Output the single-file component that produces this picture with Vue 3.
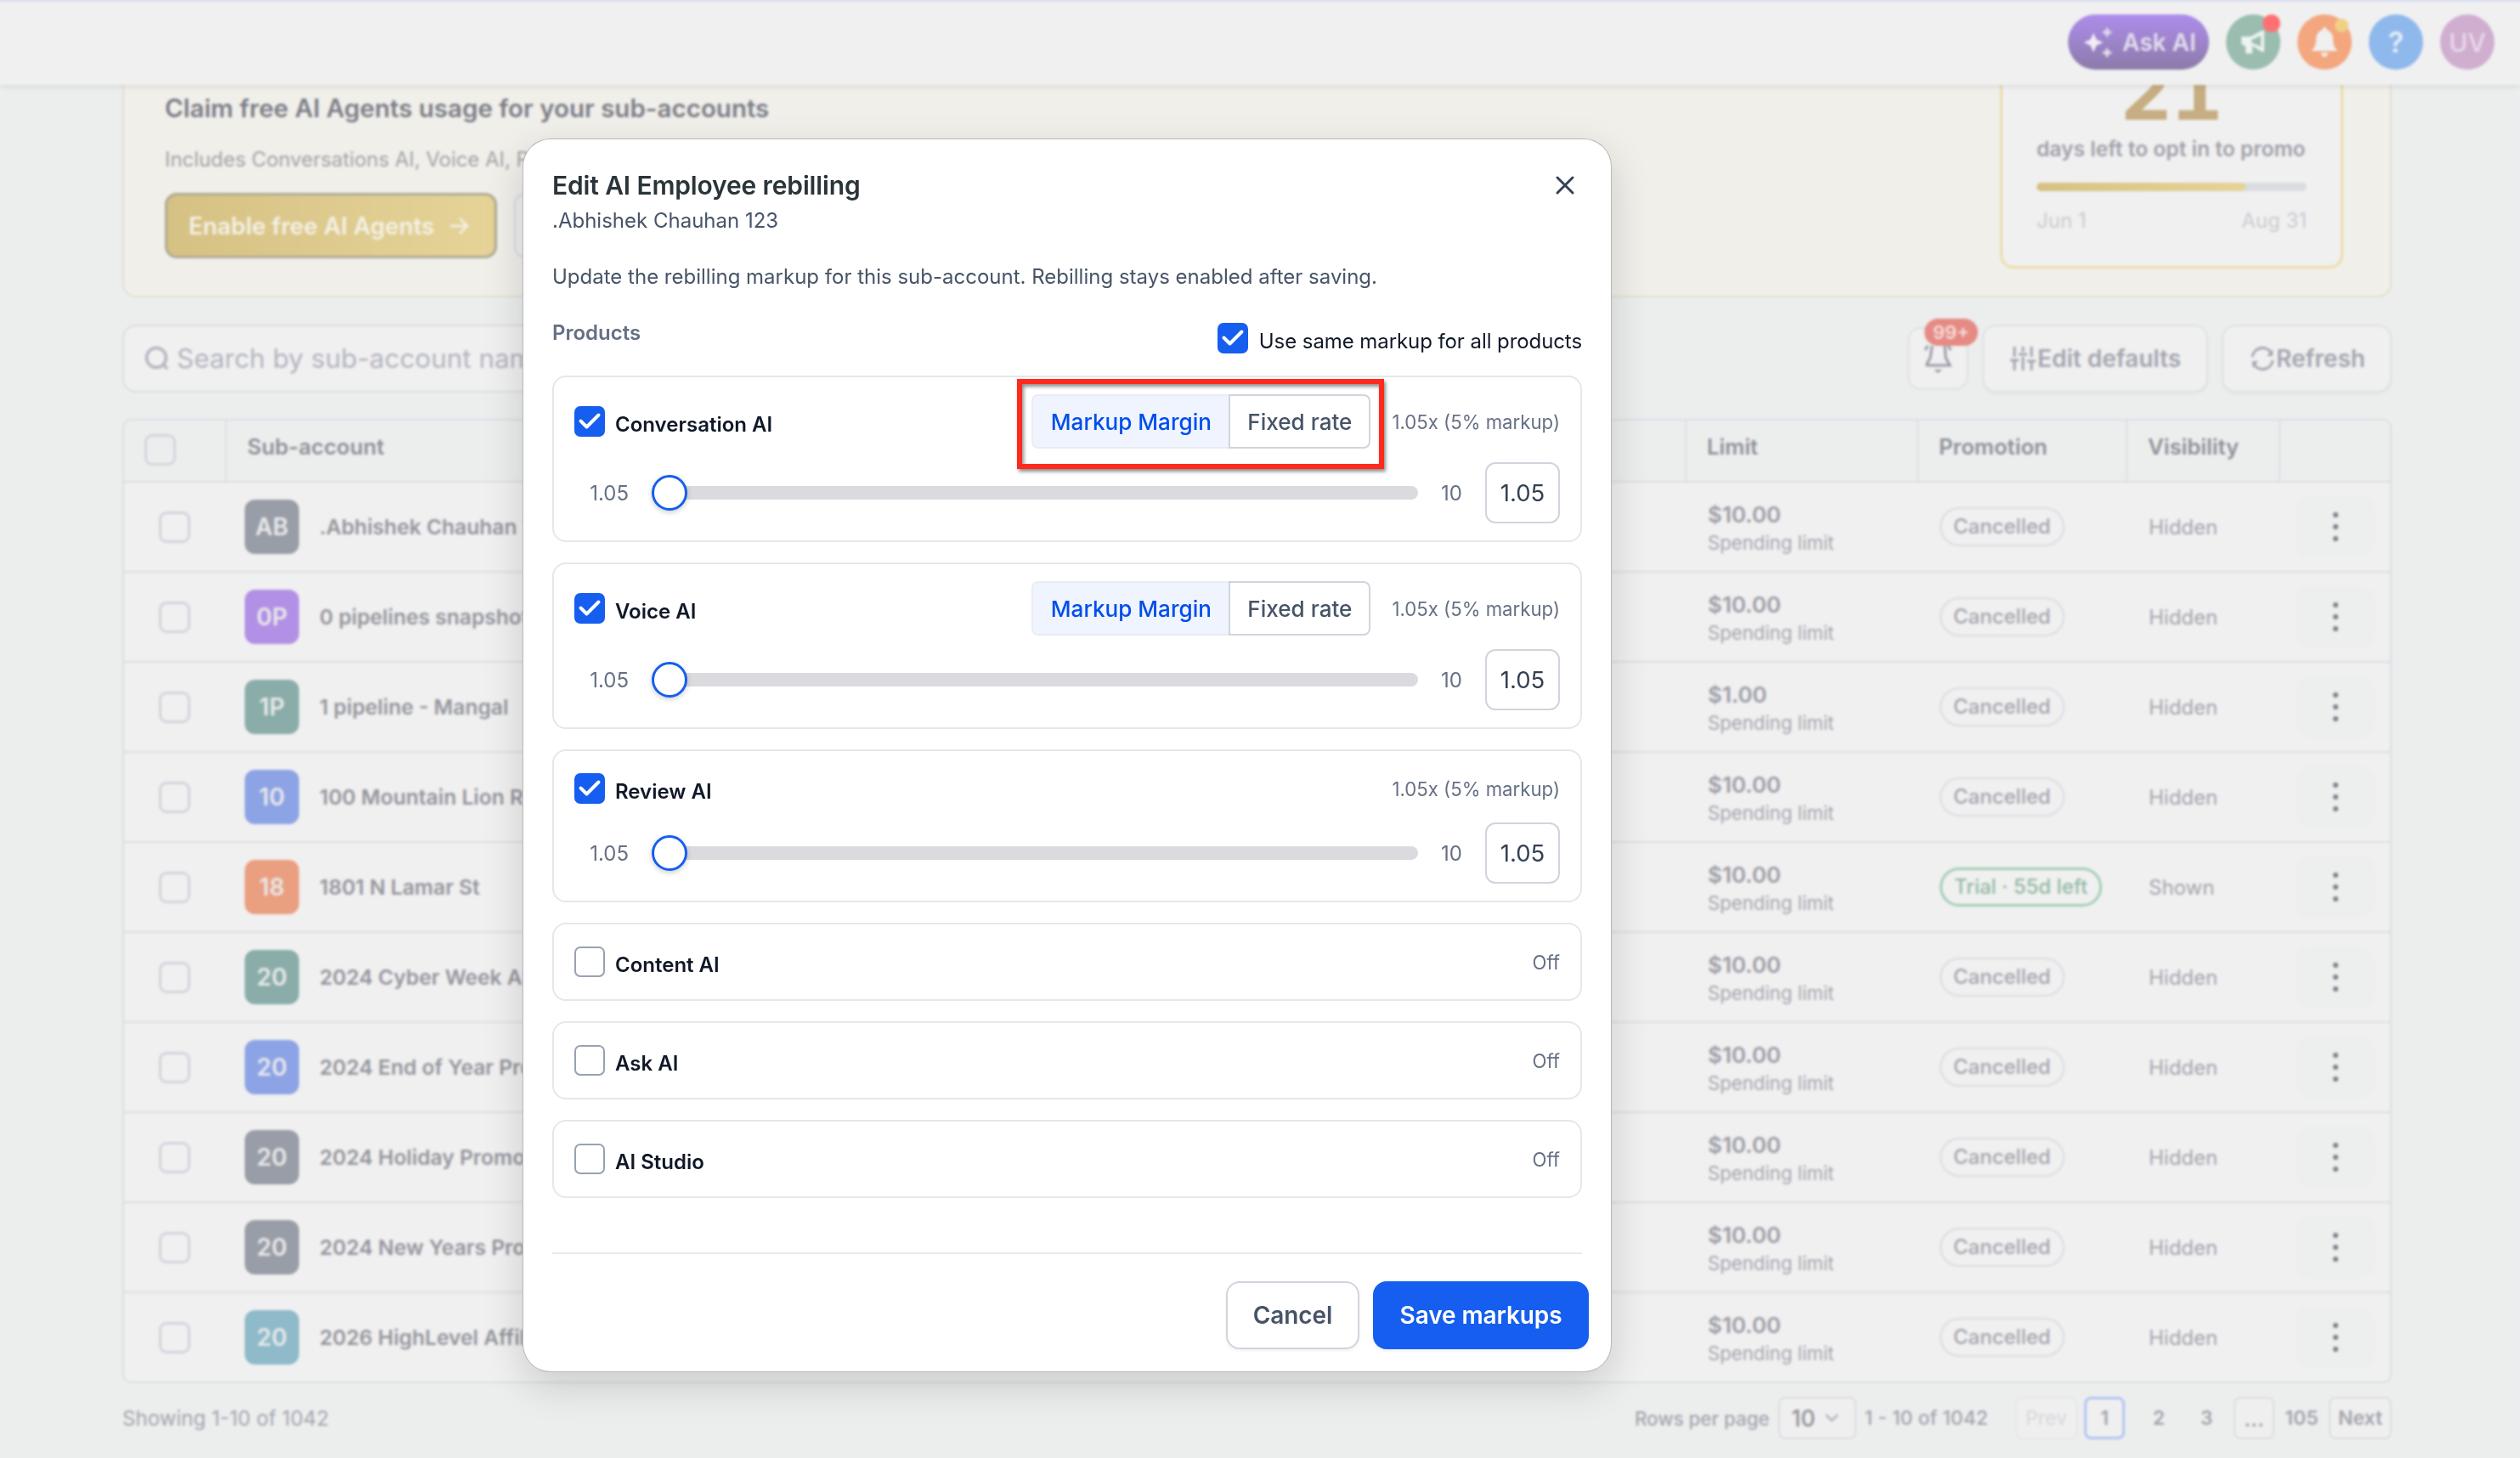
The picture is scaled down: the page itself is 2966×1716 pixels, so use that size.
<template>
  <div class="page">
    <!-- top bar -->
    <header class="topbar">
      <div class="ask">
        <svg width="32" height="36" viewBox="0 0 32 36">
          <path d="M11 6.500l3.500 8L22.500 18l-8 3.500L11 29.500l-3.500-8L-.5 18l8-3.500z" fill="#f1eef6" />
          <path d="M27 -.5l2.200 4.300L33.500 6l-4.300 2.200L27 12.500l-2.200-4.300L20.500 6l4.300-2.200z" fill="#ded6ec" />
          <path d="M27 23.500l2.200 4.300 4.300 2.200-4.300 2.200L27 36.500l-2.200-4.300-4.300-2.200 4.300-2.200z" fill="#dedae6" />
        </svg>
        <span>Ask AI</span>
      </div>
      <div class="circle green">
        <svg width="30" height="30" viewBox="0 0 30 30">
          <path d="M1 8h11l13-7h3v25h-3l-11-7v9H6v-9H4l-3-3z" fill="#eef2f0" />
          <path d="M13 12l11-5v13l-11-5z" fill="#9abdb0" />
        </svg>
        <i class="dot red"></i>
      </div>
      <div class="circle orange">
        <svg width="32" height="36" viewBox="0 0 32 36">
          <path d="M16 0c1.500 0 2.500 1.500 2.500 3.200C23.500 4.500 26 9 26 14.500c0 7 2 9 5 13.500H1c3-4.500 5-6.500 5-13.500C6 9 8.500 4.500 13.500 3.200 13.500 1.500 14.500 0 16 0zM12 30h8c0 3-2 5-4 5s-4-2-4-5z" fill="#f0f0f0" />
        </svg>
        <i class="dot yellow"></i>
      </div>
      <div class="circle blue">?</div>
      <div class="circle pink">UV</div>
    </header>

    <main class="main">
      <!-- promo banner -->
      <section class="banner">
        <div class="banner-left">
          <h2>Claim free AI Agents usage for your sub-accounts</h2>
          <p>Includes Conversations AI, Voice AI, R</p>
          <div class="banner-btns">
            <button class="gold">
              Enable free AI Agents
              <svg width="22" height="22" viewBox="0 0 22 22" fill="none" stroke="#f2eee0" stroke-width="3">
                <path d="M1 11h19M12 2l9 9-9 9" />
              </svg>
            </button>
            <button class="ghost"></button>
          </div>
        </div>
        <div class="promo">
          <div class="num">21</div>
          <div class="days">days left to opt in to promo</div>
          <div class="bar"><div class="fill" :style="{ width: promo + '%' }"></div></div>
          <div class="dates"><span>Jun 1</span><span>Aug 31</span></div>
        </div>
      </section>

      <!-- search and actions -->
      <section class="toolbar">
        <div class="search">
          <svg width="30" height="30" viewBox="0 0 30 30" fill="none" stroke="#b3b4c0" stroke-width="3.500">
            <circle cx="14" cy="14" r="11.500" />
            <path d="M22 22l5 5" />
          </svg>
          <span>Search by sub-account nam</span>
        </div>
        <div class="actions">
          <div class="bell">
            <svg width="34" height="36" viewBox="0 0 34 36" fill="none" stroke="#999ba7" stroke-width="3">
              <path d="M3 26h28l-5-9-1-14M3 26l5-9 2-14" />
              <path d="M2 8l3-5M32 8l-3-5" />
              <path d="M12 31h10l-5 4z" fill="#999ba7" stroke="none" />
            </svg>
            <span class="badge">99+</span>
          </div>
          <button class="action edit">
            <svg width="30" height="28" viewBox="0 0 30 28" fill="none" stroke="#a3a5b0" stroke-width="3">
              <path d="M5 0v12M5 16v12M0 16h10M15 0v6M15 12v16M10 9h10M25 0v12M25 18v10M20 17h10" />
            </svg>
            Edit defaults
          </button>
          <button class="action refresh">
            <svg width="28" height="28" viewBox="0 0 28 28" fill="none" stroke="#a3a5b0" stroke-width="3">
              <path d="M2 12A12 12 0 0 1 24 7M26 16A12 12 0 0 1 4 21" />
              <path d="M26 3v8h-7zM2 25v-8h7z" fill="#a3a5b0" stroke="none" />
            </svg>
            Refresh
          </button>
        </div>
      </section>

      <!-- sub-account table -->
      <section class="table">
        <div class="tr head">
          <div class="c-check"><i class="box"></i></div>
          <div class="th">Sub-account</div>
          <div class="th">Limit</div>
          <div class="th">Promotion</div>
          <div class="th">Visibility</div>
          <div class="th"></div>
        </div>
        <div v-for="(row, i) in rows" :key="i" class="tr">
          <div class="c-check"><i class="box"></i></div>
          <div class="c-name">
            <span class="avatar" :class="row.color">{{ row.initials }}</span>
            <span>{{ row.name }}</span>
          </div>
          <div class="c-limit">
            <b>{{ row.limit }}</b>
            <small>Spending limit</small>
          </div>
          <div class="c-promo">
            <span class="pill" :class="{ trial: row.trial }">{{ row.trial || "Cancelled" }}</span>
          </div>
          <div class="c-vis">{{ row.trial ? "Shown" : "Hidden" }}</div>
          <div class="c-more">
            <span class="more"><i></i><i></i><i></i></span>
          </div>
        </div>
      </section>

      <!-- pagination -->
      <section class="pager">
        <span class="showing">Showing 1-10 of 1042</span>
        <div class="pages">
          <span class="rpp">Rows per page</span>
          <span class="select">
            10
            <svg width="16" height="10" viewBox="0 0 16 10" fill="none" stroke="#b4b5be" stroke-width="2.500">
              <path d="M1 1l7 7 7-7" />
            </svg>
          </span>
          <span class="range">1 - 10 of 1042</span>
          <span class="pg bordered prev">Prev</span>
          <span class="pg bordered current">1</span>
          <span class="pg two">2</span>
          <span class="pg">3</span>
          <span class="pg bordered dots">...</span>
          <span class="pg">105</span>
          <span class="pg bordered next">Next</span>
        </div>
      </section>
    </main>

    <div class="mask"></div>

    <!-- modal -->
    <div class="modal">
      <div class="modal-head">
        <div>
          <h1>Edit AI Employee rebilling</h1>
          <p class="sub">.Abhishek Chauhan 123</p>
        </div>
        <svg class="close" width="24" height="24" viewBox="0 0 24 24" fill="none" stroke="#344054" stroke-width="3" stroke-linecap="round">
          <path d="M3 3l18 18M21 3L3 21" />
        </svg>
      </div>
      <p class="desc">Update the rebilling markup for this sub-account. Rebilling stays enabled after saving.</p>

      <div class="products">
        <span class="label">Products</span>
        <label class="same">
          <span class="check on">
            <svg width="26" height="20" viewBox="0 0 26 20"><path d="M2.500 9.500l7 7L23.500 2.500" /></svg>
          </span>
          <span class="same-text">Use same markup for all products</span>
        </label>
      </div>

      <div class="cards">
        <div v-for="(p, i) in products" :key="p.name" class="card">
          <div class="card-head" :class="{ tall: p.seg }">
            <span class="check" :class="{ on: p.on }">
              <svg v-if="p.on" width="26" height="20" viewBox="0 0 26 20"><path d="M2.500 9.500l7 7L23.500 2.500" /></svg>
            </span>
            <span class="name">{{ p.name }}</span>
            <div v-if="p.seg" class="seg">
              <span class="seg-item active">Markup Margin</span>
              <span class="seg-item">Fixed rate</span>
              <div v-if="i === 0" class="highlight"></div>
            </div>
            <span class="state">{{ p.on ? "1.05x (5% markup)" : "Off" }}</span>
          </div>
          <div v-if="p.on" class="slider-row">
            <span class="min">1.05</span>
            <div class="slider"><span class="knob"></span></div>
            <span class="max">10</span>
            <span class="value">1.05</span>
          </div>
        </div>
      </div>

      <div class="modal-foot">
        <button class="cancel">Cancel</button>
        <button class="save">Save markups</button>
      </div>
    </div>
  </div>
</template>

<script setup>
import { ref } from "vue";

const promo = ref(77.5);

const rows = ref([
  { initials: "AB", name: ".Abhishek Chauhan 1", color: "gray", limit: "$10.00" },
  { initials: "0P", name: "0 pipelines snapshot", color: "purple", limit: "$10.00" },
  { initials: "1P", name: "1 pipeline - Mangal", color: "teal", limit: "$1.00" },
  { initials: "10", name: "100 Mountain Lion R", color: "indigo", limit: "$10.00" },
  { initials: "18", name: "1801 N Lamar St", color: "coral", limit: "$10.00", trial: "Trial · 55d left" },
  { initials: "20", name: "2024 Cyber Week AI", color: "teal", limit: "$10.00" },
  { initials: "20", name: "2024 End of Year Pro", color: "indigo", limit: "$10.00" },
  { initials: "20", name: "2024 Holiday Promo", color: "gray", limit: "$10.00" },
  { initials: "20", name: "2024 New Years Pro", color: "gray", limit: "$10.00" },
  { initials: "20", name: "2026 HighLevel Affil", color: "cyan", limit: "$10.00" },
]);

const products = ref([
  { name: "Conversation AI", on: true, seg: true },
  { name: "Voice AI", on: true, seg: true },
  { name: "Review AI", on: true, seg: false },
  { name: "Content AI", on: false, seg: false },
  { name: "Ask AI", on: false, seg: false },
  { name: "AI Studio", on: false, seg: false },
]);
</script>

<style>
body {
  margin: 0;
}
</style>

<style scoped>
* {
  box-sizing: border-box;
}

.page {
  position: relative;
  width: 2966px;
  height: 1716px;
  overflow: hidden;
  background: #eceeee;
  font-family: Inter, "Liberation Sans", sans-serif;
  display: flex;
  flex-direction: column;
  white-space: nowrap;
}

h1,
h2,
p {
  margin: 0;
}

button {
  font-family: inherit;
}

svg {
  display: block;
  flex: none;
  overflow: visible;
}

/* 顶栏 */
.topbar {
  position: relative;
  z-index: 1;
  flex: none;
  height: 100px;
  background: #f0f0f0;
  border-top: 2px solid #d9def2;
  box-shadow: 0 2px 6px rgba(0, 0, 0, 0.1);
  display: flex;
  justify-content: flex-end;
  align-items: center;
  gap: 20px;
  padding: 0 30px 3px 0;
}

.ask {
  width: 166px;
  height: 65px;
  border-radius: 33px;
  background: linear-gradient(#ae8cec, #8b7ba8);
  display: flex;
  align-items: center;
  gap: 13px;
  padding-left: 19px;
  color: #e2dcec;
  font-size: 28px;
  font-weight: 600;
}

.circle {
  position: relative;
  width: 64px;
  height: 65px;
  border-radius: 50%;
  display: flex;
  align-items: center;
  justify-content: center;
  font-size: 30px;
  font-weight: 500;
}

.green {
  background: #9abdb0;
}

.orange {
  background: #f4a67e;
}

.blue {
  background: #8fb8ec;
  color: #e4edf6;
  font-size: 34px;
  font-weight: 600;
}

.pink {
  background: #d0aed0;
  color: #e9d9e9;
}

.dot {
  position: absolute;
  border-radius: 50%;
}

.dot.red {
  top: 0;
  right: 0;
  width: 21px;
  height: 21px;
  background: #ff7072;
}

.dot.yellow {
  top: 5px;
  right: 4px;
  width: 16px;
  height: 16px;
  background: #f0d084;
}

.main {
  flex: 1;
  overflow: hidden;
  padding: 0 151px 0 144px;
  display: flex;
  flex-direction: column;
}

/* 横幅 */
.banner {
  flex: none;
  height: 250px;
  background: #f0efea;
  border: 2px solid #e5ddcf;
  border-top: none;
  border-radius: 0 0 16px 16px;
  display: flex;
  justify-content: space-between;
  padding: 0 55px 0 48px;
}

.banner-left {
  padding-top: 9px;
}

.banner h2 {
  font-size: 29.5px;
  line-height: 36px;
  font-weight: 600;
  color: #7b7c86;
}

.banner p {
  margin-top: 25px;
  font-size: 23.9px;
  line-height: 36px;
  color: #a3a3a6;
}

.banner-btns {
  margin-top: 21px;
  display: flex;
  gap: 20px;
}

.gold {
  width: 391px;
  height: 77px;
  border: 3px solid #aeaa92;
  border-radius: 14px;
  background: linear-gradient(90deg, #d6c184, #e5d397);
  color: #f4f1e6;
  font-size: 27.8px;
  font-weight: 600;
  display: flex;
  align-items: center;
  gap: 18px;
  padding: 0 0 0 25px;
}

.ghost {
  width: 320px;
  height: 77px;
  border: 2px solid #d9dadf;
  border-radius: 14px;
  background: #efeff0;
}

.promo {
  width: 404px;
  height: 216px;
  border: 3px solid #ecdcaa;
  border-top: none;
  border-radius: 0 0 16px 16px;
  background: #f0f0f0;
  padding: 0 40px;
}

.num {
  margin-top: -25px;
  text-align: center;
  font-size: 94px;
  line-height: 64px;
  font-weight: 700;
  font-variant-numeric: tabular-nums;
  color: #c6ae82;
}

.days {
  margin-top: 20px;
  font-size: 24.6px;
  line-height: 32px;
  font-weight: 600;
  color: #a0a1aa;
}

.bar {
  margin-top: 24px;
  height: 10px;
  border-radius: 5px;
  background: #dadce0;
  overflow: hidden;
}

.fill {
  height: 100%;
  border-radius: 5px;
  background: linear-gradient(90deg, #d6c184, #e5d397);
}

.dates {
  margin-top: 19px;
  display: flex;
  justify-content: space-between;
  font-size: 24px;
  line-height: 32px;
  color: #cacbd2;
}

/* 工具栏 */
.toolbar {
  flex: none;
  margin-top: 32px;
  display: flex;
  justify-content: space-between;
}

.search {
  width: 1500px;
  height: 80px;
  border: 2px solid #d9dbe1;
  border-radius: 16px;
  background: #f0f0f0;
  display: flex;
  align-items: center;
  gap: 8px;
  padding-left: 24px;
  font-size: 31.4px;
  color: #b3b4bf;
}

.actions {
  display: flex;
  align-items: center;
  gap: 16px;
}

.bell {
  position: relative;
  width: 72px;
  height: 74px;
  border: 2px solid #dcdee3;
  border-radius: 16px;
  background: #f0f0f0;
  display: flex;
  align-items: center;
  justify-content: center;
}

.badge {
  position: absolute;
  top: -12px;
  left: 18px;
  width: 63px;
  height: 32px;
  border-radius: 16px;
  background: #e68a84;
  color: #f5dedc;
  font-size: 22px;
  font-weight: 600;
  line-height: 32px;
  text-align: center;
}

.action {
  height: 80px;
  border: 2px solid #dcdee3;
  border-radius: 16px;
  background: #f0f0f0;
  box-shadow: 0 2px 3px rgba(0, 0, 0, 0.04);
  display: flex;
  align-items: center;
  gap: 2px;
  padding: 0 0 0 31px;
  font-size: 28px;
  font-weight: 600;
  color: #a3a5b0;
}

.edit {
  width: 266px;
}

.refresh {
  width: 200px;
  padding-left: 32px;
}

/* 表格 */
.table {
  flex: none;
  margin-top: 31px;
  border: 2px solid #dadce2;
  border-radius: 10px;
  background: #f0f0f0;
  overflow: hidden;
}

.tr {
  display: grid;
  grid-template-columns: 119px 1fr 273px 246px 180px 131px;
  height: 106px;
  border-top: 2px solid #dadde3;
}

.tr.head {
  height: 71px;
  border-top: none;
  background: #eceeee;
}

.c-check {
  display: flex;
  align-items: center;
  padding-left: 41px;
}

.head .c-check {
  padding: 0 0 2px 24px;
}

.box {
  width: 37px;
  height: 37px;
  border: 3px solid #d2d4dc;
  border-radius: 9px;
}

.th {
  border-left: 2px solid #dcdee3;
  padding-left: 24px;
  font-size: 25.7px;
  line-height: 62px;
  font-weight: 600;
  color: #8f9098;
}

.c-name {
  display: flex;
  align-items: center;
  gap: 24px;
  padding-left: 23px;
  font-size: 24.6px;
  font-weight: 600;
  color: #94959d;
  overflow: hidden;
}

.avatar {
  width: 64px;
  height: 64px;
  border-radius: 12px;
  display: flex;
  align-items: center;
  justify-content: center;
  font-size: 28px;
  color: #e8e8ea;
}

.gray {
  background: #999da7;
}

.purple {
  background: #b290e6;
}

.teal {
  background: #8aada9;
}

.indigo {
  background: #8ca3e5;
}

.coral {
  background: #ea9f80;
}

.cyan {
  background: #8ebac9;
}

.c-limit {
  display: flex;
  flex-direction: column;
  justify-content: center;
  padding: 4px 0 0 27px;
  line-height: 33px;
}

.c-limit b {
  font-size: 26px;
  font-weight: 600;
  color: #9c9da6;
}

.c-limit small {
  font-size: 22.2px;
  color: #a5a6ae;
}

.c-promo {
  display: flex;
  align-items: center;
  padding-left: 27px;
}

.pill {
  height: 46px;
  border: 2px solid #d9dbe0;
  border-radius: 23px;
  padding: 0 14px;
  line-height: 42px;
  font-size: 24px;
  font-weight: 500;
  color: #a4a5ae;
}

.pill.trial {
  border: 3px solid #a0cdb4;
  padding: 0 14px;
  line-height: 40px;
  color: #92b9a3;
}

.c-vis {
  display: flex;
  align-items: center;
  padding-left: 27px;
  font-size: 24px;
  color: #a3a4ad;
}

.c-more {
  display: flex;
  align-items: center;
  padding-left: 20px;
}

.more {
  width: 93px;
  height: 74px;
  border-radius: 16px;
  background: #edeeee;
  display: flex;
  flex-direction: column;
  align-items: center;
  justify-content: center;
  gap: 8px;
}

.more i {
  width: 6px;
  height: 6px;
  border-radius: 50%;
  background: #7c7d87;
}

/* 分页 */
.pager {
  flex: none;
  margin-top: 16px;
  height: 50px;
  display: flex;
  justify-content: space-between;
  align-items: center;
  font-size: 23px;
  color: #a3a4ad;
}

.showing {
  font-size: 24.1px;
}

.pages {
  display: flex;
  align-items: center;
  gap: 8px;
  font-weight: 500;
}

.rpp {
  margin-right: 2px;
  font-size: 22.3px;
}

.select {
  width: 92px;
  height: 50px;
  margin-right: 2px;
  border: 2px solid #d9dbe1;
  border-radius: 8px;
  background: #efefef;
  display: flex;
  align-items: center;
  gap: 11px;
  padding-left: 14px;
  font-size: 26.5px;
  color: #8f909a;
}

.range {
  margin-right: 24px;
}

.pg {
  width: 48px;
  height: 50px;
  display: flex;
  align-items: center;
  justify-content: center;
  font-weight: 600;
}

.pg.bordered {
  border: 2px solid #d9dbe1;
  border-radius: 8px;
  background: #efefef;
}

.pg.prev {
  width: 73px;
  border-color: #e5e6e9;
  color: #d6d7dc;
  font-weight: 400;
}

.pg.current {
  border: 3px solid #b3c3f2;
}

.pg.two {
  width: 56px;
  padding-left: 8px;
}

.pg.dots {
  font-size: 26px;
  font-weight: 500;
}

.pg.next {
  width: 74px;
}

/* 遮罩 */
.mask {
  position: absolute;
  inset: 0;
  z-index: 2;
  backdrop-filter: blur(1.8px);
}

/* 弹窗 */
.modal {
  position: absolute;
  z-index: 3;
  left: 616px;
  top: 164px;
  width: 1280px;
  height: 1450px;
  border-radius: 32px;
  background: #fff;
  box-shadow: 0 0 0 1px #b8b8b8, 0 16px 48px rgba(0, 0, 0, 0.16);
  padding: 36px 34px 26px;
  display: flex;
  flex-direction: column;
}

.modal-head {
  display: flex;
  justify-content: space-between;
}

.modal h1 {
  font-size: 30px;
  line-height: 37px;
  font-weight: 600;
  letter-spacing: -0.15px;
  color: #2a3439;
}

.sub {
  margin-top: 4px;
  font-size: 24px;
  line-height: 37px;
  color: #475467;
}

.close {
  margin: 6px 8px 0 0;
}

.desc {
  margin-top: 28px;
  font-size: 24px;
  line-height: 40px;
  color: #475467;
}

.products {
  margin-top: 34px;
  height: 36px;
  display: flex;
  justify-content: space-between;
}

.label {
  font-size: 24px;
  line-height: 24px;
  font-weight: 600;
  color: #667085;
}

.same {
  display: flex;
  gap: 13px;
}

.same-text {
  font-size: 24px;
  line-height: 44px;
  letter-spacing: -0.08px;
  color: #101828;
}

.check {
  flex: none;
  width: 36px;
  height: 36px;
  border: 2px solid #98a2b3;
  border-radius: 7px;
  display: flex;
  align-items: center;
  justify-content: center;
}

.check.on {
  border: none;
  background: #155eef;
}

.check path {
  fill: none;
  stroke: #fff;
  stroke-width: 4;
  stroke-linecap: round;
  stroke-linejoin: round;
}

.cards {
  margin-top: 26px;
  display: flex;
  flex-direction: column;
  gap: 24px;
}

.card {
  border: 2px solid #e4e7ec;
  border-radius: 16px;
  padding: 20px 24px;
}

.card-head {
  height: 48px;
  display: flex;
  align-items: center;
}

.card-head.tall {
  height: 64px;
}

.name {
  flex: 1;
  padding: 7px 0 0 12px;
  font-size: 24px;
  font-weight: 600;
  color: #101828;
}

.seg {
  position: relative;
  display: flex;
  margin-right: 25px;
}

.seg-item {
  width: 167px;
  height: 64px;
  border: 2px solid #d0d5dd;
  border-radius: 0 8px 8px 0;
  line-height: 61px;
  text-align: center;
  font-size: 26.1px;
  font-weight: 500;
  color: #475467;
}

.seg-item.active {
  width: 232px;
  border-color: #eaecf0;
  border-right: none;
  border-radius: 8px 0 0 8px;
  background: #eff4ff;
  color: #004eeb;
}

.highlight {
  position: absolute;
  left: -17px;
  top: -18px;
  width: 432px;
  height: 106px;
  border: 6px solid #ff2a1c;
  box-shadow: 2px 3px 4px rgba(0, 0, 0, 0.45), inset 2px 3px 4px rgba(0, 0, 0, 0.45);
}

.state {
  font-size: 22.2px;
  color: #667085;
}

.slider-row {
  margin-top: 16px;
  height: 72px;
  display: grid;
  grid-template-columns: 64px 1fr 25px 88px;
  gap: 27px;
  align-items: center;
  font-size: 24px;
  color: #667085;
}

.min {
  text-align: right;
}

.slider {
  position: relative;
  height: 16px;
  border-radius: 8px;
  background: #dbdbdf;
}

.knob {
  position: absolute;
  left: 0;
  top: -13px;
  width: 42px;
  height: 42px;
  border: 3px solid #155eef;
  border-radius: 50%;
  background: #fff;
  box-shadow: 0 2px 6px rgba(0, 0, 0, 0.2);
}

.value {
  height: 72px;
  border: 2px solid #d0d5dd;
  border-radius: 12px;
  line-height: 69px;
  text-align: center;
  font-size: 27.5px;
  color: #344054;
}

.modal-foot {
  margin-top: 64px;
  border-top: 2px solid #e9eaee;
  padding-top: 32px;
  display: flex;
  justify-content: flex-end;
  gap: 16px;
}

.modal-foot button {
  height: 80px;
  border-radius: 16px;
  font-size: 28px;
  font-weight: 600;
  letter-spacing: -0.1px;
  padding: 0;
}

.cancel {
  width: 157px;
  border: 2px solid #d0d5dd;
  background: #fff;
  box-shadow: 0 2px 4px rgba(16, 24, 40, 0.06);
  color: #475467;
}

.save {
  width: 254px;
  margin-right: -8px;
  border: none;
  background: #155eef;
  box-shadow: 0 2px 4px rgba(16, 24, 40, 0.06);
  color: #fff;
}
</style>
